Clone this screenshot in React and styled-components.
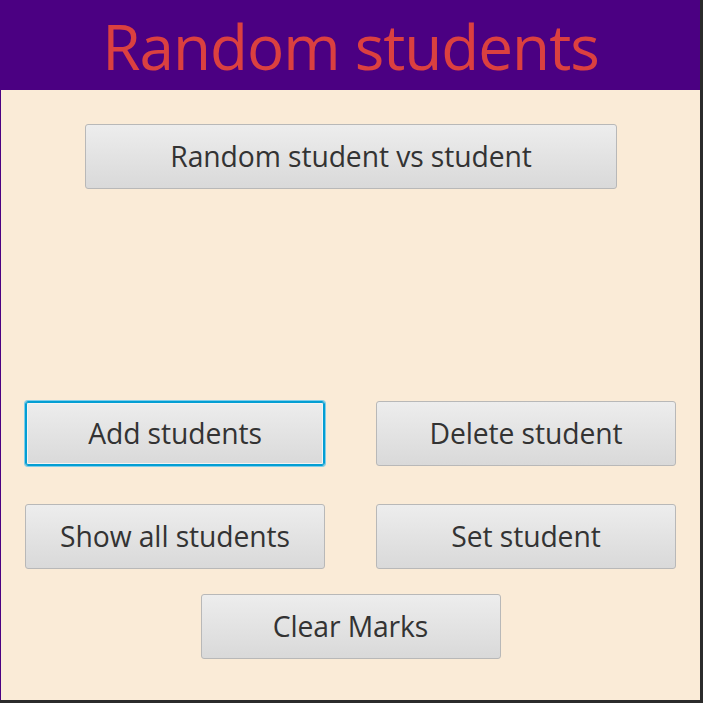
import styled, { createGlobalStyle, css } from "styled-components";

const GlobalStyle = createGlobalStyle`
  html, body {
    margin: 0;
    padding: 0;
    background: #2b2b2b;
  }
`;

export default function App() {
  return (
    <>
      <GlobalStyle />
      <Window>
        <Header>
          <Title>Random students</Title>
        </Header>
        <Content>
          <WideButton>Random student vs student</WideButton>
          <Grid>
            <Button focused>Add students</Button>
            <Button>Delete student</Button>
            <Button>Show all students</Button>
            <Button>Set student</Button>
          </Grid>
          <Bottom>
            <Button>Clear Marks</Button>
          </Bottom>
        </Content>
      </Window>
    </>
  );
}

const Window = styled.div`
  width: 699px;
  height: 700px;
  border-left: 1px solid #4b0082;
  background-color: #faebd7;
  display: flex;
  flex-direction: column;
  font-family: "Open Sans", "Noto Sans", sans-serif;
`;

const Header = styled.header`
  height: 90px;
  background-color: #4b0082;
  display: flex;
  align-items: center;
  justify-content: center;
`;

const Title = styled.h1`
  margin: 0;
  font-weight: 400;
  font-size: 62px;
  color: #db4040;
  letter-spacing: -1px;
  line-height: 1;
  transform: translateY(1px);
`;

const Content = styled.div`
  display: flex;
  flex-direction: column;
  align-items: center;
  padding: 34px 24px 0 24px;
`;

const Button = styled.button`
  width: 300px;
  height: 65px;
  border: 1px solid #b8b8b8;
  border-radius: 3px;
  background: linear-gradient(#ededed, #d9d9d9);
  color: #333333;
  font-family: "Open Sans", "Noto Sans", sans-serif;
  font-size: 28.3px;
  letter-spacing: -0.1px;
  padding: 0 0 1px 0;
  cursor: pointer;
  ${({ focused }) =>
    focused &&
    css`
      border: 1px solid #039ed3;
      box-shadow: 0 0 0 1px #7fcde9, inset 0 0 0 1px #039ed3,
        inset 0 0 0 2px #f4f4f4;
    `}
`;

const WideButton = styled(Button)`
  width: 532px;
  margin-left: 1px;
`;

const Grid = styled.div`
  margin-top: 212px;
  align-self: stretch;
  display: grid;
  grid-template-columns: 300px 300px;
  justify-content: space-between;
  row-gap: 38px;
`;

const Bottom = styled.div`
  margin-top: 25px;
  display: flex;
  justify-content: center;
`;
